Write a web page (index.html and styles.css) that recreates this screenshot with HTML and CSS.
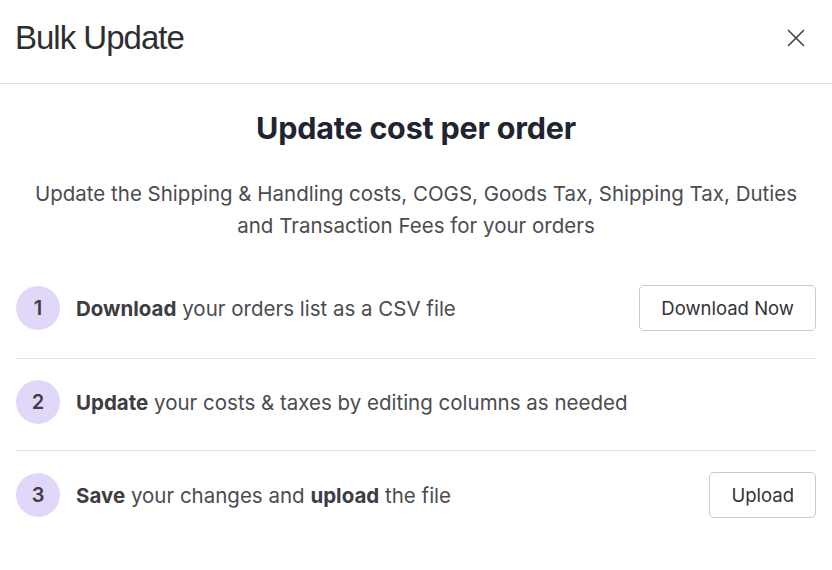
FILE: index.html
```html
<!DOCTYPE html>
<html>
<head>
<meta charset="utf-8">
<link rel="stylesheet" href="styles.css">
</head>
<body>
<div class="modal">
  <header class="modal-header">
    <h1 class="modal-title">Bulk Update</h1>
    <button class="close" aria-label="Close">
      <svg width="18" height="18" viewBox="0 0 18 18"><path d="M1.5 1.5 L16.5 16.5 M16.5 1.5 L1.5 16.5" stroke="#444" stroke-width="1.6" fill="none" stroke-linecap="round"/></svg>
    </button>
  </header>
  <main class="modal-body">
    <h2 class="heading">Update cost per order</h2>
    <p class="intro">Update the Shipping &amp; Handling costs, COGS, Goods Tax, Shipping Tax, Duties and Transaction Fees for your orders</p>
    <ol class="steps">
      <li class="step">
        <span class="num">1</span>
        <span class="text"><b>Download</b> your orders list as a CSV file</span>
        <button class="btn">Download Now</button>
      </li>
      <li class="step">
        <span class="num">2</span>
        <span class="text"><b>Update</b> your costs &amp; taxes by editing columns as needed</span>
      </li>
      <li class="step">
        <span class="num">3</span>
        <span class="text"><b>Save</b> your changes and <b>upload</b> the file</span>
        <button class="btn">Upload</button>
      </li>
    </ol>
  </main>
</div>
</body>
</html>
```
FILE: styles.css
```css
* { box-sizing: border-box; }
html, body { margin: 0; padding: 0; background: #fff; }
body { font-family: Inter, "Liberation Sans", sans-serif; color: #4b4b4f; }

.modal { width: 832px; height: 570px; }

.modal-header {
  height: 84px;
  display: flex;
  align-items: center;
  justify-content: space-between;
  padding: 0 27px 8px 15px;
  border-bottom: 1px solid #e2e2e4;
}
.modal-title {
  margin: 0;
  font-family: "Liberation Sans", Arial, sans-serif;
  font-weight: 400;
  font-size: 33px;
  letter-spacing: -1px;
  color: #2e2e31;
}
.close {
  background: none; border: 0; padding: 0; width: 18px; height: 18px;
  display: flex; cursor: pointer;
}

.modal-body { padding: 22px 16px 0; }

.heading {
  margin: 0;
  text-align: center;
  font-size: 30.5px;
  line-height: 44px;
  font-weight: 700;
  color: #1f2530;
  letter-spacing: -0.2px;
}
.intro {
  margin: 28px 10px 0;
  text-align: center;
  font-size: 20.5px;
  line-height: 32px;
  color: #4b4b50;
}

.steps { list-style: none; margin: 21px 0 0; padding: 0; }
.step {
  display: flex;
  align-items: center;
  gap: 16px;
  padding: 21px 0 26px;
  border-bottom: 1px solid #e4e4e7;
}
.step:first-child { padding: 22px 0 27px; }
.step:last-child { border-bottom: 0; }
.num {
  flex: none;
  width: 44px; height: 44px;
  border-radius: 50%;
  background: #e1d8f9;
  display: flex; align-items: center; justify-content: center;
  font-size: 20px; font-weight: 600; color: #3d3d42;
}
.text { flex: 1; font-size: 20.5px; color: #4b4b50; }
.text b { font-weight: 700; color: #3d3d42; }
.btn {
  flex: none;
  height: 46px;
  padding: 0 21px;
  background: #fff;
  border: 1px solid #c9c9ce;
  border-radius: 5px;
  font-family: Inter, "Liberation Sans", sans-serif;
  font-size: 18.5px;
  color: #333338;
}
```
